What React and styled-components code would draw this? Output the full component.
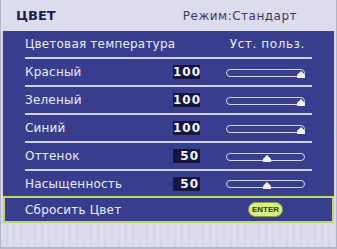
import React from "react";
import styled, { createGlobalStyle } from "styled-components";

const Global = createGlobalStyle`
  html, body { margin: 0; padding: 0; background: #d6d6e8; }
  body { font-family: "DejaVu Sans", "Liberation Sans", sans-serif; }
`;

const Frame = styled.div`
  width: 337px;
  height: 249px;
  box-sizing: border-box;
  display: flex;
  flex-direction: column;
  background: #d8d8ea;
  border-left: 1px solid #b4b4c8;
  border-right: 1px solid #b4b4c8;
  overflow: hidden;
`;

const Header = styled.div`
  height: 31px;
  flex-shrink: 0;
  display: flex;
  align-items: center;
  justify-content: space-between;
  padding: 0 39px 0 15px;
  background: #dcdcec;
`;

const MenuTitle = styled.span`
  font-size: 13px;
  font-weight: bold;
  color: #1c1c52;
`;

const Mode = styled.span`
  font-size: 12px;
  letter-spacing: 0.5px;
  color: #3a3a66;
`;

const Panel = styled.div`
  margin: 0 2px;
  height: 192px;
  flex-shrink: 0;
  display: flex;
  flex-direction: column;
  background: #383d8e;
`;

const Row = styled.div`
  height: ${p => p.h}px;
  box-sizing: border-box;
  margin: 0 22px;
  display: grid;
  grid-template-columns: 148px 53px 79px 7px;
  align-items: center;
  border-bottom: ${p => (p.line ? "2px solid #d4d4f0" : "none")};
  color: #ececf8;
  font-size: 12px;
`;

const Label = styled.span`
  letter-spacing: 0.2px;
  white-space: nowrap;
`;

const RightText = styled.span`
  grid-column: 2 / 4;
  text-align: right;
  white-space: nowrap;
  letter-spacing: 0.6px;
`;

const Value = styled.span`
  width: 27px;
  height: 14px;
  background: #16163e;
  color: #f4f4ff;
  font-weight: bold;
  font-size: 12px;
  letter-spacing: 1px;
  line-height: 14px;
  text-align: right;
  box-sizing: border-box;
  padding-right: 1px;
`;

const Track = styled.div`
  position: relative;
  height: 8px;
  box-sizing: border-box;
  border: 1.5px solid #d6d6f2;
  border-radius: 4px;
  margin-top: 1px;
`;

const Thumb = styled.svg`
  position: absolute;
  bottom: -2px;
  width: 8px;
  height: 7px;
`;

const ResetRow = styled.div`
  height: 27px;
  box-sizing: border-box;
  border: 2px solid #bcd86a;
  padding: 0 20px;
  display: grid;
  grid-template-columns: 148px 53px 79px 7px;
  align-items: center;
  color: #ececf8;
  font-size: 12px;
`;

const Enter = styled.span`
  grid-column: 3;
  justify-self: center;
  width: 35px;
  height: 15px;
  border-radius: 8px;
  background: #d6ee84;
  border: 1px solid #8aa044;
  box-sizing: border-box;
  color: #2a3a10;
  font-family: "Liberation Sans", sans-serif;
  font-weight: bold;
  font-size: 8px;
  line-height: 13px;
  text-align: center;
`;

const Footer = styled.div`
  flex: 1;
  margin-top: 1px;
  background: repeating-linear-gradient(
    90deg,
    #dcdcec 0px,
    #dcdcec 5px,
    #d0d0e4 6px,
    #dcdcec 7px
  );
  border-bottom: 2px solid #b8b8cc;
`;

const Slider = ({ value }) => (
  <Track>
    <Thumb
      viewBox="0 0 8 7"
      style={{ left: `${value / 100 * 68 + 2}px` }}
    >
      <path d="M4 0 L8 4 L8 7 L0 7 L0 4 Z" fill="#f4f4ff" />
    </Thumb>
  </Track>
);

const rows = [
  { label: "Красный", value: 100 },
  { label: "Зеленый", value: 100 },
  { label: "Синий", value: 100 },
  { label: "Оттенок", value: 50 },
  { label: "Насыщенность", value: 50 },
];

export default function App() {
  return (
    <>
      <Global />
      <Frame>
        <Header>
          <MenuTitle>ЦВЕТ</MenuTitle>
          <Mode>Режим:Стандарт</Mode>
        </Header>
        <Panel>
          <Row h={28} line>
            <Label>Цветовая температура</Label>
            <RightText>Уст. польз.</RightText>
          </Row>
          {rows.map((r, i) => (
            <Row key={r.label} h={i === rows.length - 1 ? 25 : 28} line={i < rows.length - 1}>
              <Label>{r.label}</Label>
              <Value>{r.value}</Value>
              <Slider value={r.value} />
            </Row>
          ))}
          <ResetRow>
            <Label>Сбросить Цвет</Label>
            <Enter>ENTER</Enter>
          </ResetRow>
        </Panel>
        <Footer />
      </Frame>
    </>
  );
}
